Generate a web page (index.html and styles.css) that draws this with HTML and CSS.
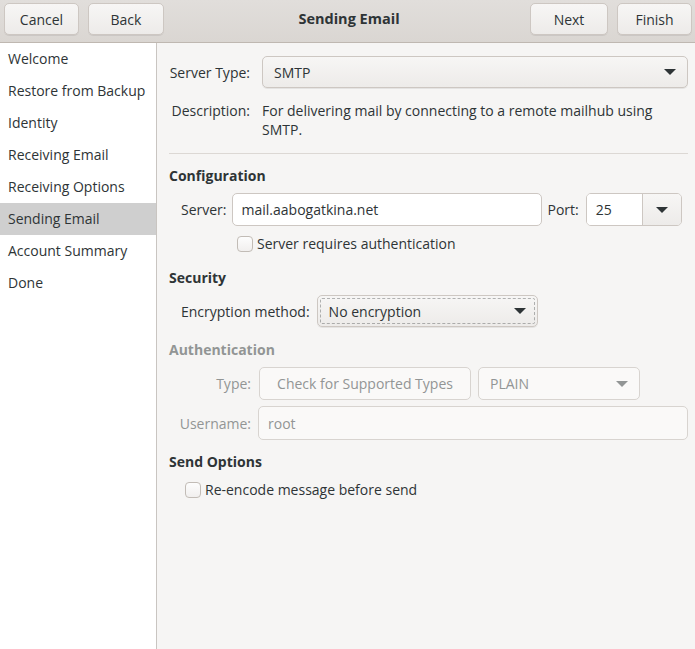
FILE: index.html
```html
<!DOCTYPE html>
<html>
<head>
<meta charset="utf-8">
<link rel="stylesheet" href="styles.css">
</head>
<body>
<div class="header">
  <div class="hgroup">
    <button class="btn w75">Cancel</button>
    <button class="btn w76">Back</button>
  </div>
  <div class="title">Sending Email</div>
  <div class="hgroup right">
    <button class="btn w78">Next</button>
    <button class="btn w75">Finish</button>
  </div>
</div>
<div class="body">
  <div class="sidebar">
    <div class="item">Welcome</div>
    <div class="item">Restore from Backup</div>
    <div class="item">Identity</div>
    <div class="item">Receiving Email</div>
    <div class="item">Receiving Options</div>
    <div class="item selected">Sending Email</div>
    <div class="item">Account Summary</div>
    <div class="item">Done</div>
  </div>
  <div class="main">
    <div class="top-grid">
      <div class="lbl">Server Type:</div>
      <div class="combo wide"><span>SMTP</span><span class="arrow"></span></div>
      <div class="lbl desc-lbl">Description:</div>
      <div class="desc">For delivering mail by connecting to a remote mailhub using SMTP.</div>
    </div>
    <div class="sep"></div>

    <div class="heading">Configuration</div>
    <div class="row server-row">
      <span class="lbl">Server:</span>
      <div class="entry server">mail.aabogatkina.net</div>
      <span class="lbl">Port:</span>
      <div class="spin"><div class="spin-val">25</div><div class="spin-btn"><span class="arrow"></span></div></div>
    </div>
    <label class="check check-auth"><span class="box"></span>Server requires authentication</label>

    <div class="heading sec">Security</div>
    <div class="row enc-row">
      <span class="lbl">Encryption method:</span>
      <div class="combo enc"><span>No encryption</span><span class="arrow"></span></div>
    </div>

    <div class="heading auth disabled">Authentication</div>
    <div class="auth-grid disabled">
      <div class="lbl">Type:</div>
      <div class="auth-type">
        <div class="dbtn">Check for Supported Types</div>
        <div class="combo dcombo"><span>PLAIN</span><span class="arrow"></span></div>
      </div>
      <div class="lbl">Username:</div>
      <div class="entry dentry">root</div>
    </div>

    <div class="heading send">Send Options</div>
    <label class="check check-send"><span class="box"></span>Re-encode message before send</label>
  </div>
</div>
</body>
</html>
```

FILE: styles.css
```css
* { box-sizing: border-box; }
html, body { margin: 0; padding: 0; height: 100%; }
body {
  font-family: "Open Sans", "Noto Sans", sans-serif;
  font-size: 14px;
  color: #2e3436;
  background: #f6f5f4;
  width: 695px;
  height: 649px;
  overflow: hidden;
}
.header {
  height: 43px;
  display: grid;
  grid-template-columns: 1fr auto 1fr;
  align-items: start;
  background: linear-gradient(#e1dedb, #dad6d2);
  border-bottom: 1px solid #bfb8b1;
  padding: 3px 3px 0 4px;
}
.hgroup { display: flex; gap: 9px; }
.hgroup.right { justify-content: flex-end; }
.title {
  font-weight: bold;
  font-size: 14.5px;
  line-height: 32px;
  color: #2e3436;
  padding-left: 2px;
}
.btn {
  font: inherit;
  color: #2e3436;
  height: 32px;
  border: 1px solid #cdc7c2;
  border-radius: 5px;
  background: linear-gradient(#f7f6f5, #edebe9);
  box-shadow: 0 1px rgba(0,0,0,0.07);
  padding: 0;
}
.w75 { width: 75px; }
.w76 { width: 76px; }
.w78 { width: 78px; }

.body { display: flex; height: 606px; }
.sidebar {
  width: 157px;
  background: #fff;
  border-right: 1px solid #c9c5c1;
  padding-top: 0;
}
.item {
  height: 32px;
  line-height: 32px;
  padding-left: 8px;
}
.item.selected { background: #cfcfcf; }

.main {
  flex: 1;
  padding: 13px 7px 0 12px;
}
.lbl { white-space: nowrap; }
.top-grid {
  display: grid;
  grid-template-columns: 81px 1fr;
  column-gap: 12px;
  row-gap: 13px;
  align-items: center;
}
.top-grid .lbl { text-align: right; }
.desc-lbl { align-self: start; line-height: 19px; }
.desc { line-height: 19px; padding-right: 30px; }

.combo {
  height: 32px;
  border: 1px solid #cdc7c2;
  border-radius: 5px;
  background: linear-gradient(#f7f6f5, #edebe9);
  box-shadow: 0 1px rgba(0,0,0,0.07);
  display: flex;
  align-items: center;
  justify-content: space-between;
  padding: 0 11px 0 11px;
}
.arrow {
  width: 0; height: 0;
  border-left: 6px solid transparent;
  border-right: 6px solid transparent;
  border-top: 6px solid #2e3436;
}
.sep {
  height: 1px;
  background: #dcd8d4;
  margin-top: 14px;
}
.heading {
  font-weight: bold;
  line-height: 20px;
  margin-top: 12px;
}
.row { display: flex; align-items: center; }
.server-row { margin-top: 7px; padding-left: 12px; }
.server-row .lbl { margin-right: 5px; }
.entry {
  height: 33px;
  border: 1px solid #cdc7c2;
  border-radius: 5px;
  background: #fff;
  display: flex;
  align-items: center;
  padding-left: 9px;
}
.entry.server { width: 310px; margin-right: 6px; }
.spin { display: flex; height: 33px; width: 96px; border: 1px solid #cdc7c2; border-radius: 5px; overflow: hidden; margin-left: 2px; }
.spin-val { flex: 1; background: #fff; display: flex; align-items: center; padding-left: 9px; }
.spin-btn {
  width: 39px;
  border-left: 1px solid #cdc7c2;
  background: linear-gradient(#f7f6f5, #edebe9);
  display: flex; align-items: center; justify-content: center;
}
.check { display: flex; align-items: center; line-height: 20px; }
.box {
  width: 16px; height: 16px;
  border: 1px solid #c2bcb6;
  border-radius: 4px;
  background: linear-gradient(#fdfdfd, #f1efee);
  margin-right: 4px;
}
.check-auth { margin-top: 8px; padding-left: 68px; }
.sec { margin-top: 14px; }
.enc-row { margin-top: 7px; padding-left: 12px; }
.enc-row .lbl { margin-right: 7px; }
.combo.enc {
  width: 221px;
  outline: 1px dashed rgba(46,52,54,0.35);
  outline-offset: -4px;
}
.auth { margin-top: 13px; }
.disabled { color: #929595; }
.auth-grid {
  display: grid;
  grid-template-columns: 82px 1fr;
  column-gap: 7px;
  row-gap: 6px;
  align-items: center;
  margin-top: 7px;
}
.auth-grid .lbl { text-align: right; }
.auth-type { display: flex; gap: 7px; padding-left: 1px; }
.dbtn {
  width: 212px; height: 33px;
  border: 1px solid #d8d4d0;
  border-radius: 5px;
  background: #faf9f8;
  display: flex; align-items: center; justify-content: center;
}
.combo.dcombo {
  width: 162px; height: 33px;
  background: #faf9f8;
  border-color: #d8d4d0;
  box-shadow: none;
}
.dcombo .arrow { border-top-color: #929595; }
.dentry {
  height: 34px;
  background: #faf9f8;
  border-color: #d8d4d0;
}
.send { margin-top: 12px; }
.check-send { margin-top: 8px; padding-left: 16px; }
```
